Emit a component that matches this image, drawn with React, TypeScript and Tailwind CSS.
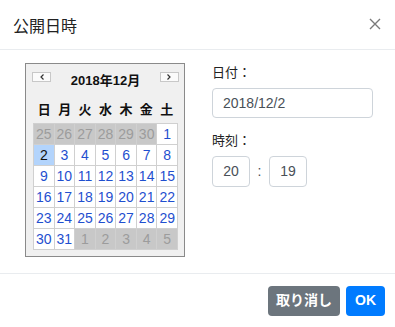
import React from "react";

const weeks: { d: number; out: boolean }[][] = [
  [25, 26, 27, 28, 29, 30].map((d) => ({ d, out: true })).concat([{ d: 1, out: false }]),
  [2, 3, 4, 5, 6, 7, 8].map((d) => ({ d, out: false })),
  [9, 10, 11, 12, 13, 14, 15].map((d) => ({ d, out: false })),
  [16, 17, 18, 19, 20, 21, 22].map((d) => ({ d, out: false })),
  [23, 24, 25, 26, 27, 28, 29].map((d) => ({ d, out: false })),
  [30, 31].map((d) => ({ d, out: false })).concat([1, 2, 3, 4, 5].map((d) => ({ d, out: true }))),
];

const dows = ["日", "月", "火", "水", "木", "金", "土"];

function NavBtn({ dir }: { dir: "l" | "r" }) {
  return (
    <div className="w-[19px] h-[10px] border border-[#c8c8c8] bg-[#fbfbfb] flex items-center justify-center">
      <svg width="4" height="6" viewBox="0 0 4 6">
        {dir === "l" ? (
          <path d="M3.5 0.5 L1 3 L3.5 5.5" fill="none" stroke="#333" strokeWidth="1.2" />
        ) : (
          <path d="M0.5 0.5 L3 3 L0.5 5.5" fill="none" stroke="#333" strokeWidth="1.2" />
        )}
      </svg>
    </div>
  );
}

export default function App() {
  return (
    <div
      className="w-[395px] h-[327px] bg-white flex flex-col text-[#212529]"
      style={{ fontFamily: '"Liberation Sans", "Noto Sans CJK JP", sans-serif' }}
    >
      <div className="h-[50px] border-b border-[#e9ecef] flex items-center justify-between pl-[13px] pr-[14px] shrink-0">
        <div className="text-[16px] leading-none mt-[4px] text-[#222]">公開日時</div>
        <svg width="12" height="12" viewBox="0 0 12 12" className="mb-[1px]">
          <path d="M1 1 L11 11 M11 1 L1 11" stroke="#7a7a7a" strokeWidth="1.4" />
        </svg>
      </div>

      <div className="h-[223px] flex pt-[13px] pl-[25px] shrink-0">
        <div className="w-[160px] h-[194px] border border-[#8a8a8a] bg-[#f0f0f0] pl-[7px] pt-[6px] flex flex-col">
          <div className="w-[145px] h-[20px] flex justify-between items-start">
            <div className="mt-[2px] -ml-[1px]">
              <NavBtn dir="l" />
            </div>
            <div className="text-[13px] font-bold leading-[20px] text-[#111] mt-[1px]">2018年12月</div>
            <div className="mt-[2px] -mr-[1px]">
              <NavBtn dir="r" />
            </div>
          </div>
          <div className="w-[145px] grid grid-cols-7 px-px mt-[10px] h-[20px]">
            {dows.map((d) => (
              <div key={d} className="flex items-center justify-center text-[13px] font-bold text-[#111]">
                {d}
              </div>
            ))}
          </div>
          <div className="w-[145px] mt-[3px] p-px bg-[#d0d0d0] grid grid-cols-7 gap-px">
            {weeks.flat().map((c, i) => {
              const sel = !c.out && c.d === 2;
              const cls = c.out
                ? "bg-[#c8c8c8] text-[#9c9c9c]"
                : sel
                ? "bg-[#b3d4fc] text-[#111]"
                : "bg-white text-[#1f4fcf]";
              return (
                <div key={i} className={`h-[20px] flex items-center justify-center text-[14px] ${cls}`}>
                  {c.d}
                </div>
              );
            })}
          </div>
        </div>

        <div className="ml-[27px] w-[161px] flex flex-col">
          <div className="text-[13px] leading-none mt-[3px] text-[#222]">日付：</div>
          <div className="mt-[9px] h-[30px] border border-[#ced4da] rounded-[4px] flex items-center pl-[10px] text-[14px] text-[#495057]">
            2018/12/2
          </div>
          <div className="text-[13px] leading-none mt-[16px] text-[#222]">時刻：</div>
          <div className="mt-[9px] flex items-center">
            <div className="w-[38px] h-[31px] border border-[#ced4da] rounded-[4px] flex items-center justify-center text-[14px] text-[#495057]">
              20
            </div>
            <div className="w-[19px] text-center text-[14px] text-[#495057]">:</div>
            <div className="w-[38px] h-[31px] border border-[#ced4da] rounded-[4px] flex items-center justify-center text-[14px] text-[#495057]">
              19
            </div>
          </div>
        </div>
      </div>

      <div className="flex-1 border-t border-[#e9ecef] flex items-center justify-end gap-[6px] pr-[10px]">
        <div className="w-[72px] h-[30px] rounded-[4px] bg-[#6c757d] text-white text-[14px] font-bold flex items-center justify-center">
          取り消し
        </div>
        <div className="w-[39px] h-[30px] rounded-[4px] bg-[#007bff] text-white text-[14px] font-bold flex items-center justify-center">
          OK
        </div>
      </div>
    </div>
  );
}
